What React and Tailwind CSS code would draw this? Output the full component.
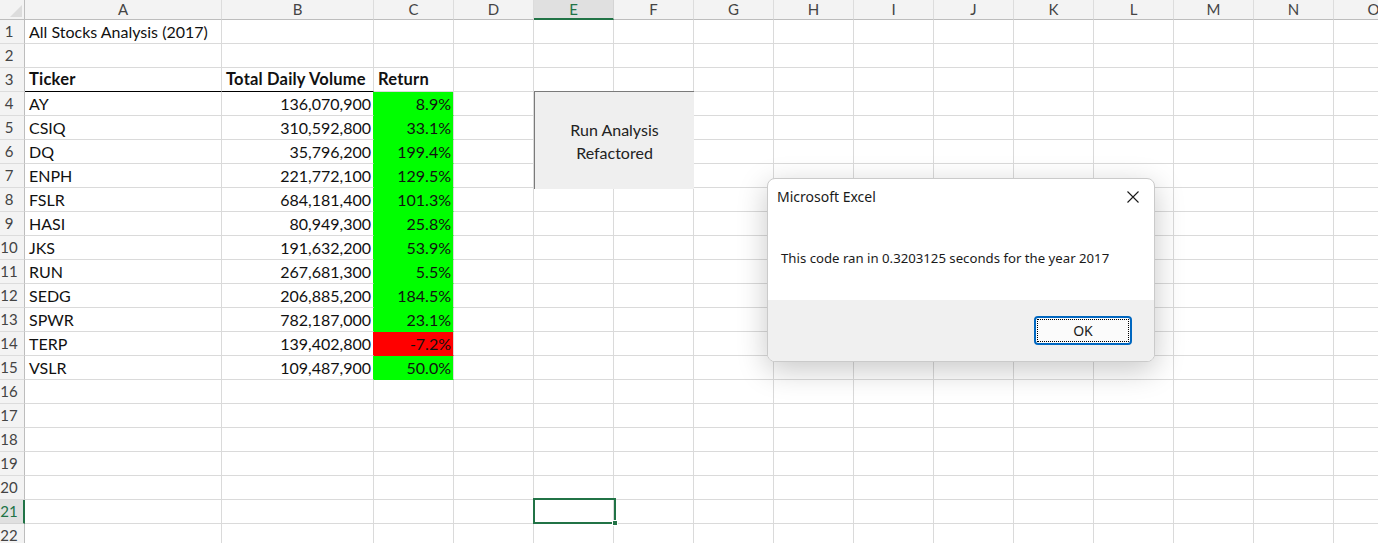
import React from 'react';

const COLS = [
  { key: 'A', w: 'w-[197px]' },
  { key: 'B', w: 'w-[152px]' },
  { key: 'C', w: 'w-20' },
  { key: 'D', w: 'w-20' },
  { key: 'E', w: 'w-20' },
  { key: 'F', w: 'w-20' },
  { key: 'G', w: 'w-20' },
  { key: 'H', w: 'w-20' },
  { key: 'I', w: 'w-20' },
  { key: 'J', w: 'w-20' },
  { key: 'K', w: 'w-20' },
  { key: 'L', w: 'w-20' },
  { key: 'M', w: 'w-20' },
  { key: 'N', w: 'w-20' },
  { key: 'O', w: 'w-20' },
];

const STOCKS = [
  ['AY', '136,070,900', '8.9%'],
  ['CSIQ', '310,592,800', '33.1%'],
  ['DQ', '35,796,200', '199.4%'],
  ['ENPH', '221,772,100', '129.5%'],
  ['FSLR', '684,181,400', '101.3%'],
  ['HASI', '80,949,300', '25.8%'],
  ['JKS', '191,632,200', '53.9%'],
  ['RUN', '267,681,300', '5.5%'],
  ['SEDG', '206,885,200', '184.5%'],
  ['SPWR', '782,187,000', '23.1%'],
  ['TERP', '139,402,800', '-7.2%'],
  ['VSLR', '109,487,900', '50.0%'],
];

const SELECTED_ROW = 21;
const SELECTED_COL = 'E';

// cell content for a given row / column
const cellFor = (row, col) => {
  if (row === 1 && col === 'A') return { text: 'All Stocks Analysis (2017)' };
  if (row === 3) {
    if (col === 'A') return { text: 'Ticker', bold: true, under: true };
    if (col === 'B') return { text: 'Total Daily Volume', bold: true, under: true };
    if (col === 'C') return { text: 'Return', bold: true };
  }
  const s = STOCKS[row - 4];
  if (s) {
    if (col === 'A') return { text: s[0] };
    if (col === 'B') return { text: s[1], right: true, fillRight: s[2].startsWith('-') ? 'red' : 'green' };
    if (col === 'C') return { text: s[2], right: true, fill: s[2].startsWith('-') ? 'red' : 'green' };
  }
  return {};
};

function Cell({ row, col }) {
  const c = cellFor(row, col.key);
  let cls = `${col.w} shrink-0 h-full flex items-center border-r border-b overflow-visible whitespace-nowrap`;
  if (c.fill === 'green') cls += ' bg-[#00ff00] border-b-[#00ff00] border-r-[#dadada]';
  else if (c.fill === 'red') cls += ' bg-[#ff0000] border-b-[#ff0000] border-r-[#dadada]';
  else cls += ' border-[#dadada]';
  if (c.under) cls += ' border-b-black';
  if (c.fillRight === 'green') cls += ' border-r-[#00ff00]';
  if (c.fillRight === 'red') cls += ' border-r-[#ff0000]';
  cls += c.right ? ' justify-end pr-[2px]' : ' pl-[4px]';
  return (
    <div className={cls}>
      {c.text && <span className={c.bold ? 'font-bold text-[16.5px] tracking-[0.2px]' : ''}>{c.text}</span>}
    </div>
  );
}

function CloseIcon() {
  return (
    <svg width="12" height="12" viewBox="0 0 12 12" fill="none" stroke="#1a1a1a" strokeWidth="1.1">
      <path d="M0.5 0.5 L11.5 11.5 M11.5 0.5 L0.5 11.5" />
    </svg>
  );
}

export default function App() {
  const rows = Array.from({ length: 22 }, (_, i) => i + 1);

  return (
    <div className="relative w-[1378px] h-[543px] overflow-hidden bg-white text-[16px] text-[#111] font-['Lato','Liberation_Sans',sans-serif]">
      {/* column headers */}
      <div className="flex h-[20px] text-[15px]">
        <div className="w-[25px] shrink-0 h-full bg-[#f3f3f3] border-r border-b border-[#bdbdbd] relative">
          <svg className="absolute right-[2px] bottom-[2px]" width="12" height="12" viewBox="0 0 12 12">
            <polygon points="12,0 12,12 0,12" fill="#dcdcdc" />
          </svg>
        </div>
        {COLS.map((col) =>
          col.key === SELECTED_COL ? (
            <div key={col.key} className={`${col.w} shrink-0 h-full flex items-center justify-center bg-[#e0e0e0] border-r border-[#d4d4d4] border-b-2 border-b-[#217346] text-[#217346]`}>
              {col.key}
            </div>
          ) : (
            <div key={col.key} className={`${col.w} shrink-0 h-full flex items-center justify-center bg-[#f3f3f3] border-r border-[#dcdcdc] border-b border-b-[#bdbdbd] text-[#444]`}>
              {col.key}
            </div>
          )
        )}
      </div>

      {/* rows */}
      {rows.map((r) => (
        <div key={r} className="flex h-6">
          {r === SELECTED_ROW ? (
            <div className="w-[25px] shrink-0 h-full flex items-center bg-[#e0e0e0] border-r-2 border-r-[#217346] border-b border-b-[#d4d4d4] text-[#217346] text-[15px]">
              <span className="w-[18px] text-center">{r}</span>
            </div>
          ) : (
            <div className="w-[25px] shrink-0 h-full flex items-center bg-[#f3f3f3] border-r border-r-[#bdbdbd] border-b border-b-[#dcdcdc] text-[#444] text-[15px]">
              <span className="w-[18px] text-center">{r}</span>
            </div>
          )}
          {COLS.map((col) => <Cell key={col.key} row={r} col={col} />)}
        </div>
      ))}

      {/* active cell E21 */}
      <div className="absolute left-[533px] top-[498px] w-[83px] h-[26px] border-2 border-[#217346]" />
      <div className="absolute left-[612px] top-[520px] w-[6px] h-[6px] bg-[#217346] border border-white" />

      {/* macro button shape */}
      <div className="absolute left-[534px] top-[91px] w-[160px] h-[98px] bg-[#efefef] border-l border-t border-[#7a7a7a] flex flex-col items-center justify-center text-[#222] leading-[23px]">
        <span>Run Analysis</span>
        <span>Refactored</span>
      </div>

      {/* message box */}
      <div className="absolute left-[767px] top-[178px] w-[388px] h-[184px] rounded-lg border border-[#cacaca] bg-white shadow-[0_8px_30px_rgba(0,0,0,0.22)] overflow-hidden flex flex-col font-['Noto_Sans','Open_Sans',sans-serif] text-[#1a1a1a]">
        <div className="h-[121px] shrink-0 flex flex-col">
          <div className="flex items-start justify-between pl-[9px] pr-[15px] pt-[8px] h-[37px]">
            <span className="text-[14px] leading-[20px]">Microsoft Excel</span>
            <span className="pt-[4px]"><CloseIcon /></span>
          </div>
          <div className="pl-[13px] pt-[33px] text-[13.2px] leading-[18px]">
            This code ran in 0.3203125 seconds for the year 2017
          </div>
        </div>
        <div className="flex-1 bg-[#f0f0f0] flex justify-end items-start pt-[16px] pr-[22px]">
          <div className="w-[98px] h-[29px] rounded-[4px] border-2 border-[#0067c0] bg-[#fbfbfb] p-[1px]">
            <div className="w-full h-full border border-dotted border-black flex items-center justify-center text-[14px]">
              OK
            </div>
          </div>
        </div>
      </div>
    </div>
  );
}
